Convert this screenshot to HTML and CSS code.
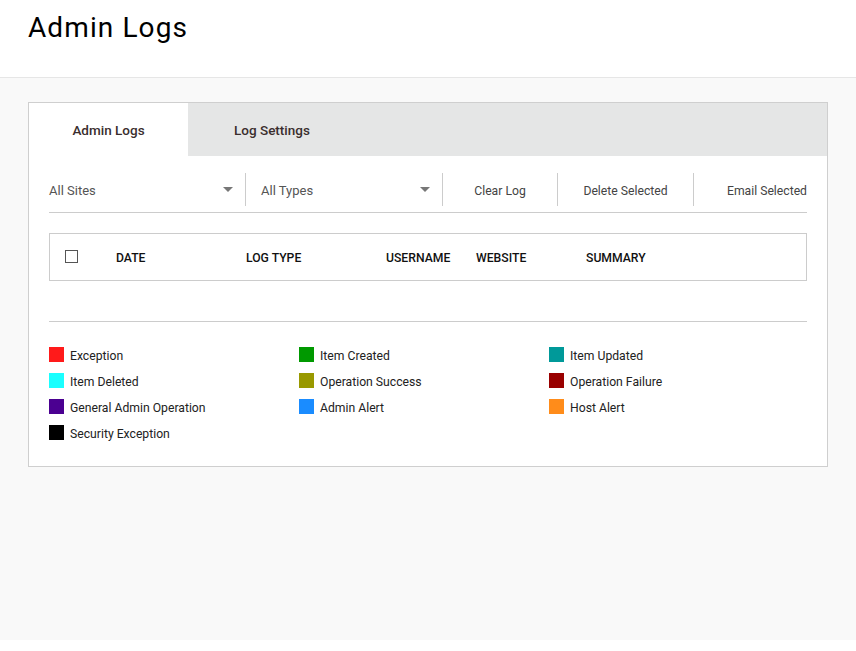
FILE: index.html
```html
<!DOCTYPE html>
<html>
<head>
<meta charset="utf-8">
<link rel="stylesheet" href="styles.css">
</head>
<body>
<header class="header">
  <h1 class="title">Admin Logs</h1>
</header>
<main class="main">
  <section class="panel">
    <nav class="tabs">
      <div class="tab tab-active">Admin Logs</div>
      <div class="tab">Log Settings</div>
    </nav>
    <div class="panel-body">
      <div class="toolbar">
        <div class="tool select">
          <span>All Sites</span>
          <span class="caret"></span>
        </div>
        <div class="tool select sep">
          <span>All Types</span>
          <span class="caret"></span>
        </div>
        <div class="tool btn sep">Clear Log</div>
        <div class="tool btn sep">Delete Selected</div>
        <div class="tool btn btn-last sep">Email Selected</div>
      </div>
      <div class="table-head">
        <div class="cell"><span class="checkbox"></span></div>
        <div class="cell">DATE</div>
        <div class="cell">LOG TYPE</div>
        <div class="cell">USERNAME</div>
        <div class="cell">WEBSITE</div>
        <div class="cell">SUMMARY</div>
      </div>
      <hr class="divider">
      <div class="legend">
        <div class="legend-item"><span class="swatch c-exception"></span><span class="label">Exception</span></div>
        <div class="legend-item"><span class="swatch c-created"></span><span class="label">Item Created</span></div>
        <div class="legend-item"><span class="swatch c-updated"></span><span class="label">Item Updated</span></div>
        <div class="legend-item"><span class="swatch c-deleted"></span><span class="label">Item Deleted</span></div>
        <div class="legend-item"><span class="swatch c-success"></span><span class="label">Operation Success</span></div>
        <div class="legend-item"><span class="swatch c-failure"></span><span class="label">Operation Failure</span></div>
        <div class="legend-item"><span class="swatch c-general"></span><span class="label">General Admin Operation</span></div>
        <div class="legend-item"><span class="swatch c-admin"></span><span class="label">Admin Alert</span></div>
        <div class="legend-item"><span class="swatch c-host"></span><span class="label">Host Alert</span></div>
        <div class="legend-item"><span class="swatch c-security"></span><span class="label">Security Exception</span></div>
      </div>
    </div>
  </section>
</main>
</body>
</html>
```
FILE: styles.css
```css
* { box-sizing: border-box; }
html, body {
  margin: 0;
  padding: 0;
  background: #ffffff;
  font-family: Roboto, "Liberation Sans", sans-serif;
  color: #222;
}
.header {
  height: 78px;
  border-bottom: 1px solid #e6e6e6;
  padding: 11px 28px 0;
  background: #fff;
}
.title {
  margin: 0;
  font-size: 28px;
  line-height: 33px;
  font-weight: 400;
  letter-spacing: 1.1px;
  color: #000;
}
.main {
  background: #f9f9f9;
  height: 562px;
  padding: 24px 28px 0;
}
.panel {
  background: #fff;
  border: 1px solid #cfcfcf;
  padding-bottom: 26px;
}
.tabs {
  display: flex;
  height: 53px;
  background: #e5e6e6;
}
.tab {
  display: flex;
  align-items: center;
  padding: 0 45px 0 46px;
  font-size: 13.5px;
  color: #3a2e2e;
  font-weight: 500;
}
.tab-active {
  background: #fff;
  width: 159px;
  justify-content: center;
  padding: 0;
}
.panel-body {
  padding: 0 20px;
}
.toolbar {
  display: grid;
  grid-template-columns: 196px 197px 115px 136px 114px;
  padding: 17px 0 6px;
  border-bottom: 1px solid #cccccc;
}
.tool {
  height: 33px;
  display: flex;
  align-items: center;
  padding-top: 2px;
  font-size: 12.2px;
  color: #444;
}
.sep { border-left: 1px solid #cccccc; }
.select {
  justify-content: space-between;
  padding-right: 12px;
  font-size: 13px;
  color: #555;
}
.select.sep { padding-left: 15px; }
.caret {
  width: 0;
  height: 0;
  margin-top: -2px;
  border-left: 5px solid transparent;
  border-right: 5px solid transparent;
  border-top: 5px solid #777;
}
.btn { justify-content: center; }
.btn-last { justify-content: flex-end; }
.table-head {
  margin-top: 20px;
  height: 48px;
  border: 1px solid #cccccc;
  display: grid;
  grid-template-columns: 66px 130px 140px 90px 110px 1fr;
  align-items: center;
}
.cell {
  font-size: 12.2px;
  font-weight: 500;
  color: #111;
  display: flex;
  align-items: center;
  padding-top: 2px;
}
.cell:first-child { padding-left: 15px; padding-top: 0; }
.checkbox {
  display: block;
  width: 13px;
  height: 13px;
  border: 1px solid #555;
  margin-top: -2px;
}
.divider {
  margin: 40px 0 0;
  border: 0;
  border-top: 1px solid #cccccc;
  height: 0;
}
.legend {
  margin-top: 25px;
  display: grid;
  grid-template-columns: 250px 250px 250px;
  row-gap: 11px;
}
.legend-item {
  display: flex;
  align-items: center;
  height: 15px;
  font-size: 12.2px;
  color: #222;
}
.label { padding-top: 2px; }
.swatch {
  width: 15px;
  height: 15px;
  margin-right: 6px;
  flex: none;
}
.c-exception { background: #ff1a1a; }
.c-created { background: #009900; }
.c-updated { background: #009999; }
.c-deleted { background: #1affff; }
.c-success { background: #999900; }
.c-failure { background: #990000; }
.c-general { background: #4b0091; }
.c-admin { background: #1a8cff; }
.c-host { background: #ff8c1a; }
.c-security { background: #000000; }
```
